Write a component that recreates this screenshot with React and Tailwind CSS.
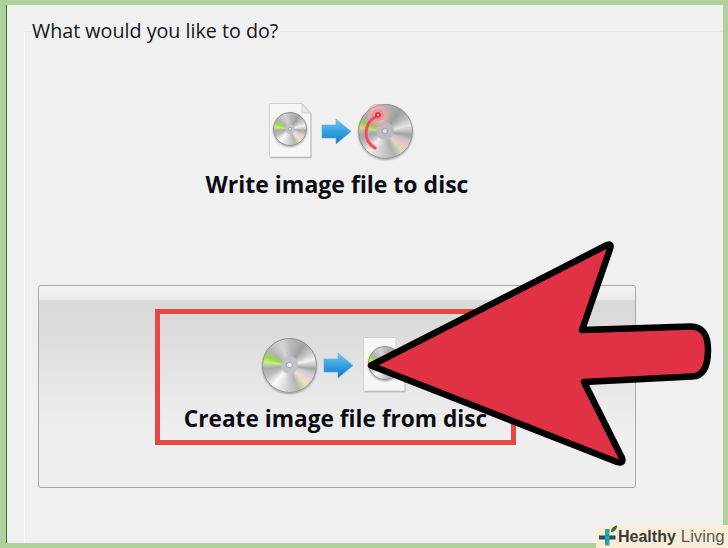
function Disc({ size, hub = 0.32 }) {
  return (
    <div
      className="relative shrink-0 rounded-full border border-[#8f8f8f] bg-[conic-gradient(#bdbdbd_0deg,#a0a0a0_35deg,#c8c8c8_58deg,#f2f2f2_76deg,#c4c4c4_90deg,#a6a6a6_98deg,#cdcdcd_112deg,#ecd2da_126deg,#e2e8bc_140deg,#b4b4b4_160deg,#dedede_196deg,#fbfbfb_220deg,#bdbdbd_245deg,#a9a9a9_262deg,#cfe889_278deg,#94e030_290deg,#b2b2b2_305deg,#d4d4d4_340deg,#bdbdbd_360deg)] flex items-center justify-center shadow-[0_1px_2px_rgba(0,0,0,0.35)]"
      style={{ width: size, height: size }}
    >
      <div
        className="rounded-full bg-[#bfc3c7] flex items-center justify-center"
        style={{ width: size * hub, height: size * hub }}
      >
        <div className="w-[38%] h-[38%] rounded-full bg-[#eef0f2] border border-[#a0a3a7]" />
      </div>
    </div>
  );
}

function FileDisc() {
  return (
    <div className="relative w-[43px] h-[56px] shrink-0 flex items-center justify-center">
      <svg viewBox="0 0 43 56" className="absolute inset-0 w-full h-full">
        <path d="M1.500 54.500H42" fill="none" stroke="#a8a8a8" strokeWidth="1.500" />
        <path d="M42 10V55" fill="none" stroke="#b8b8b8" strokeWidth="1.200" />
        <path d="M0.500 0.500H33L41.500 10V54H0.500Z" fill="#f6f6f6" stroke="#d2d2d2" />
        <path d="M33 0.500V10H41.500Z" fill="#e6e6e6" stroke="#cfcfcf" />
      </svg>
      <div className="relative -mt-[4px]">
        <Disc size={34} />
      </div>
    </div>
  );
}

function BlueArrow() {
  return (
    <svg width="31" height="27" viewBox="0 0 31 27" className="shrink-0">
      <defs>
        <linearGradient id="ba" x1="0" y1="0" x2="0" y2="1">
          <stop offset="0" stopColor="#7cc8f2" />
          <stop offset="0.55" stopColor="#2e9be0" />
          <stop offset="1" stopColor="#1878c4" />
        </linearGradient>
      </defs>
      <path d="M1 7H15V1L30 13.500L15 26V20H1Z" fill="url(#ba)" stroke="#5fa9d8" strokeWidth="0.600" />
    </svg>
  );
}

function BurnDisc() {
  return (
    <div className="relative shrink-0">
      <Disc size={55} />
      <svg viewBox="0 0 55 55" className="absolute inset-0 w-[55px] h-[55px]">
        <circle cx="27" cy="27" r="27" fill="#8a8a8a" fillOpacity="0.12" />
        <circle cx="20" cy="11" r="11" fill="#f6a0a8" fillOpacity="0.45" stroke="#f28a94" strokeOpacity="0.6" />
        <circle cx="20" cy="11" r="6" fill="#f77" fillOpacity="0.55" />
        <path d="M17 13C6 20 4 36 17 44" fill="none" stroke="#f3a0a8" strokeWidth="5" strokeLinecap="round" strokeOpacity="0.5" />
        <path d="M17 13C6 20 4 36 17 44" fill="none" stroke="#e8505e" strokeWidth="3" strokeLinecap="round" />
        <circle cx="20" cy="11" r="2.800" fill="#f01f35" />
        <circle cx="20" cy="11" r="1" fill="#fff" />
      </svg>
    </div>
  );
}

export default function App() {
  return (
    <div className="relative w-[728px] h-[548px] overflow-hidden bg-[#aed09a] pt-[5px] pl-[6px] pr-[5px] pb-[5px] font-['Open_Sans','Liberation_Sans',sans-serif]">
      <div className="h-full border-l border-[#4f5f4a] bg-[#f0f0f0] pl-[17px] pt-[13px] overflow-hidden">
        <fieldset className="h-[600px] w-[760px] border-t border-l border-t-[#e3e6ea] border-l-[#fafbfc] pl-[13px]">
          <legend className="ml-[-6px] bg-[#f0f0f0] pr-[1px] text-[19.7px] leading-[26px] text-[#141420]">
            What would you like to do?
          </legend>
          <div className="w-[598px] flex flex-col items-center pt-[59px] h-[241px]">
            <div className="flex items-center gap-[9px] ml-[7px]">
              <FileDisc />
              <BlueArrow />
              <div className="-ml-[3px]">
                <BurnDisc />
              </div>
            </div>
            <div className="mt-[7px] text-[23px] leading-[36px] font-bold text-[#0c0c14]">
              Write image file to disc
            </div>
          </div>
          <div className="w-[598px] h-[203px] rounded-[3px] border border-[#a9a9a9] flex justify-center bg-[linear-gradient(#f4f4f4_0px,#ececec_13px,#d9d9d9_15px,#dedede_60px,#e9e9e9_110px,#efefef_150px,#eeeeee_100%)]">
            <div className="mt-[23px] mr-[4px] w-[361px] h-[136px] border-[5px] border-[#e8483f] flex flex-col items-center pt-[23px]">
              <div className="flex items-center gap-[6px] ml-[-2px]">
                <Disc size={55} />
                <BlueArrow />
                <div className="ml-[3px]">
                  <FileDisc />
                </div>
              </div>
              <div className="mt-[8px] ml-[1px] text-[22.700px] leading-[36px] font-bold text-[#0c0c14]">
                Create image file from disc
              </div>
            </div>
          </div>
        </fieldset>
      </div>

      <svg className="absolute inset-0 w-[728px] h-[548px]" viewBox="0 0 728 548">
        <path
          d="M371 365.500L607 245Q612 243 610 249L582 330L690 326.500Q708 326 708 350Q708 376 692 376.500L584 382L622 458Q624 464 617 462Z"
          fill="#e03244"
          stroke="#000"
          strokeWidth="6.500"
          strokeLinejoin="round"
        />
      </svg>

      <div className="absolute right-0 bottom-0 w-[132px] h-[23px] rounded-tl-[8px] bg-[#f8eed8] flex items-center pl-[2px]">
        <svg width="20" height="23" viewBox="0 0 20 23" className="shrink-0">
          <path d="M7 4h4.500v16.500H7Z" fill="#2aa6a6" />
          <path d="M1 10.500h16.500v4H1Z" fill="#25505a" />
          <path d="M7 10.500h4.500v4H7Z" fill="#2aa6a6" />
          <path d="M13 7C13 3 16 1 19 0.500C19 4 17 7 13 7Z" fill="#2f6a3a" />
        </svg>
        <span className="font-['Liberation_Sans',sans-serif] text-[16px] leading-[20px] font-bold text-[#3a3a3a] whitespace-nowrap">
          Healthy
        </span>
        <span className="ml-[5px] font-['Liberation_Sans',sans-serif] text-[16.800px] leading-[20px] text-[#5a5a5a] whitespace-nowrap">
          Living
        </span>
      </div>
    </div>
  );
}
